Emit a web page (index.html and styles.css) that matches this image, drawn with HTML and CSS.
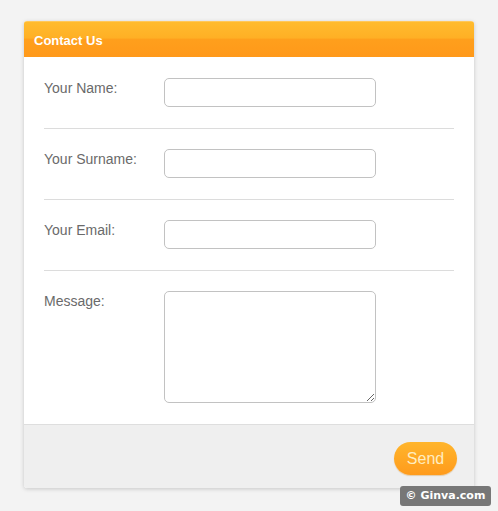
FILE: index.html
```html
<!DOCTYPE html>
<html>
<head>
<meta charset="utf-8">
<link rel="stylesheet" href="styles.css">
</head>
<body>
<div class="card">
  <div class="card-header">Contact Us</div>
  <div class="card-body">
    <div class="row">
      <label class="label">Your Name:</label>
      <input class="field" type="text">
    </div>
    <div class="row">
      <label class="label">Your Surname:</label>
      <input class="field" type="text">
    </div>
    <div class="row">
      <label class="label">Your Email:</label>
      <input class="field" type="text">
    </div>
    <div class="row last">
      <label class="label">Message:</label>
      <textarea class="field area"></textarea>
    </div>
  </div>
  <div class="card-footer">
    <button class="send">Send</button>
  </div>
</div>
<div class="watermark">© Ginva.com</div>
</body>
</html>
```

FILE: styles.css
```css
html, body {
  margin: 0;
  padding: 0;
  background: #f3f3f3;
  font-family: "Liberation Sans", Arial, sans-serif;
}
body {
  padding: 21px 24px 0 24px;
  height: 511px;
  box-sizing: border-box;
  position: relative;
}
.card {
  width: 450px;
  background: #fff;
  border-radius: 3px;
  box-shadow: 0 1px 4px rgba(0,0,0,0.18);
  overflow: hidden;
}
.card-header {
  height: 36px;
  box-sizing: border-box;
  padding: 11px 10px 0 10px;
  color: #fff;
  font-weight: bold;
  font-size: 13px;
  background: linear-gradient(to bottom, #ffbb2e 0%, #ffb025 45%, #ff9f1c 50%, #ff991a 100%);
  border-top: 1px solid #ffc85a;
}
.card-body {
  padding: 1px 20px 0 20px;
}
.row {
  display: flex;
  align-items: flex-start;
  padding: 20px 0 21px 0;
  border-bottom: 1px solid #dcdcdc;
}
.row.last {
  border-bottom: none;
  padding-bottom: 21px;
}
.label {
  width: 120px;
  color: #6a6a6a;
  font-size: 14px;
  line-height: 18px;
  padding-top: 1px;
}
.field {
  width: 212px;
  height: 29px;
  box-sizing: border-box;
  border: 1px solid #c2c2c2;
  border-radius: 5px;
  background: #fff;
  margin: 0;
  padding: 4px 6px;
  font-family: inherit;
  font-size: 14px;
}
.area {
  height: 112px;
  resize: both;
  display: block;
}
.card-footer {
  background: #efefef;
  border-top: 1px solid #dedede;
  height: 64px;
  box-sizing: border-box;
  display: flex;
  justify-content: flex-end;
  align-items: flex-start;
  padding: 17px 17px 0 0;
}
.send {
  width: 63px;
  height: 33px;
  border: none;
  border-radius: 17px;
  background: linear-gradient(to bottom, #ffb52c, #ff9b1c);
  color: #ffedc0;
  font-family: inherit;
  font-size: 16px;
  padding: 0;
  box-shadow: 0 1px 1px rgba(200,120,0,0.3);
}
.watermark {
  position: absolute;
  left: 400px;
  top: 486px;
  width: 91px;
  height: 20px;
  box-sizing: border-box;
  background: #777;
  border-radius: 3px;
  color: #fff;
  font-family: "DejaVu Sans", sans-serif;
  font-weight: bold;
  font-size: 11px;
  line-height: 20px;
  text-align: center;
}
```
